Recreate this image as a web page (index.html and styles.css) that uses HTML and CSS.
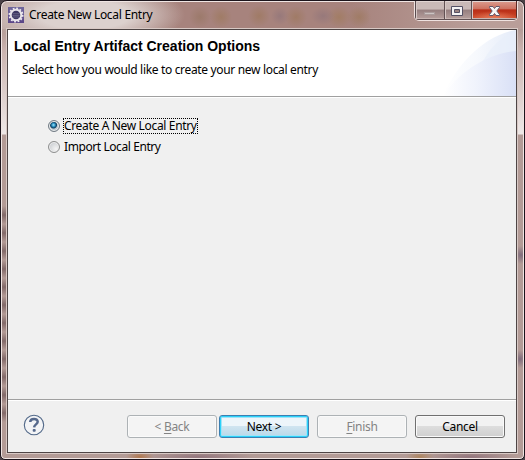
FILE: index.html
```html
<!DOCTYPE html>
<html lang="en">
<head>
<meta charset="utf-8">
<title>Create New Local Entry</title>
<link rel="stylesheet" href="styles.css">
</head>
<body>
<div class="window">
  <header class="titlebar">
    <svg class="app-icon" width="16" height="16" viewBox="0 0 16 16">
      <defs><linearGradient id="app" x2="0" y2="1"><stop stop-color="#6f679c"/><stop offset="1" stop-color="#5b4687"/></linearGradient></defs>
      <rect width="16" height="16" fill="url(#app)"/>
      <circle cx="8" cy="8" r="6.6" fill="none" stroke="#eeeaf0" stroke-width="1.8" stroke-dasharray="1.8 1.656"/>
      <circle cx="8" cy="8" r="5.3" fill="#3d3862" stroke="#e8e5ea" stroke-width="2"/>
      <path d="M4.5 6.7h7M4.300 8.4h7.4M4.800 10h6.400" stroke="#7d7898" stroke-width=".6"/>
    </svg>
    <span class="caption">Create New Local Entry</span>
    <div class="controls">
      <span class="control min"><svg width="28" height="19"><rect x="8.500" y="11.500" width="10" height="2" fill="#cdc4c3" stroke="#a99b9b"/></svg></span>
      <span class="control max"><svg width="26" height="19"><path fill-rule="evenodd" d="M6.500 5.500h11v9h-11zM9.500 8.500v3h5v-3z" fill="#f4f2f3" stroke="#545064"/></svg></span>
      <span class="control close"><svg width="45" height="19"><path d="M17.500 5.500h3.500l1.500 2 1.500-2h3.500v1L24.800 10l2.700 3.500v1h-3.500l-1.500-2-1.500 2h-3.500v-1l2.700-3.500-2.700-3.500z" fill="#f7f5f5" stroke="#62566a"/></svg></span>
    </div>
  </header>
  <main class="dialog">
    <section class="banner">
      <div class="banner-text">
        <h1>Local Entry Artifact Creation Options</h1>
        <p>Select how you would like to create your new local entry</p>
      </div>
      <svg class="swoosh" width="75" height="66" viewBox="0 0 75 66">
        <defs>
          <linearGradient id="outer"><stop stop-color="#fff"/><stop offset=".45" stop-color="#f7f9fd"/><stop offset="1" stop-color="#e5ecf9"/></linearGradient>
          <linearGradient id="inner"><stop stop-color="#fff"/><stop offset=".45" stop-color="#f0f3fc"/><stop offset="1" stop-color="#d9e0f6"/></linearGradient>
        </defs>
        <path d="M2 66C14 37 42 5 75 0v66z" fill="url(#outer)"/>
        <path d="M36 43C46 21 58 7 75 1v30z" fill="#e7eefa" opacity=".6"/>
        <path d="M2 66C16 45 42 24 75 21v45z" fill="url(#inner)"/>
      </svg>
    </section>
    <section class="options">
      <div class="option"><span class="radio checked"></span><span class="label first focused">Create A New Local Entry</span></div>
      <div class="option"><span class="radio"></span><span class="label second">Import Local Entry</span></div>
    </section>
    <footer class="actions">
      <svg class="help" width="22" height="22" viewBox="0 0 22 22">
        <circle cx="11" cy="11" r="9.700" fill="#f3f4f6" stroke="#516888" stroke-width="1.100"/>
        <path d="M7.200 8C7.400 4.100 14.700 3.900 14.700 7.800C14.700 10.400 11.200 10.400 11.100 13.400" fill="none" stroke="#56698c" stroke-width="2.500"/>
        <rect x="9.700" y="15" width="3" height="2.700" rx="1" fill="#56698c"/>
      </svg>
      <button class="btn back" disabled><span>&lt; <u>B</u>ack</span></button>
      <button class="btn next"><span>Next &gt;</span></button>
      <button class="btn finish" disabled><span><u>F</u>inish</span></button>
      <button class="btn cancel"><span>Cancel</span></button>
    </footer>
  </main>
</div>
</body>
</html>
```
FILE: styles.css
```css
* { box-sizing: border-box; }
body {
  margin: 0;
  background: #4a4146;
  font: 12px/16px "Noto Sans", "Open Sans", sans-serif;
  color: #000;
}
.window {
  width: 525px;
  height: 460px;
  border: 1px solid #1b141b;
  border-radius: 7px 7px 5px 5px;
  padding: 0 5px 5px;
  box-shadow: inset 0 0 0 1px #f0e5e3;
  background:
    radial-gradient(ellipse 14px 7px at 139px 456px, #b07850, transparent),
    radial-gradient(ellipse 55px 7px at 198px 456px, #93767d, transparent),
    radial-gradient(ellipse 14px 7px at 419px 456px, #ad8560, transparent),
    radial-gradient(ellipse 45px 7px at 470px 456px, #93767d, transparent),
    radial-gradient(ellipse 9px 9px at 520px 254px, #806c7c, transparent),
    radial-gradient(ellipse 8px 9px at 519px 358px, #806c7c, transparent),
    repeating-linear-gradient(transparent 0, rgba(90,65,68,.55) 9px, transparent 18px) 0 205px / 7px 216px no-repeat,
    linear-gradient(transparent 28px, #cbb4b0 50px, #eee8e7 133px, transparent 134px),
    radial-gradient(ellipse 100px 32px at 84px 14px, #dcd1ce 45%, transparent),
    radial-gradient(ellipse 11px 11px at 199px 16px, #9c7a6b, transparent),
    radial-gradient(ellipse 11px 11px at 220px 16px, #a07c66, transparent),
    radial-gradient(ellipse 11px 11px at 258px 15px, #a07b66, transparent),
    radial-gradient(ellipse 9px 9px at 279px 15px, #97797b, transparent),
    radial-gradient(ellipse 11px 11px at 295px 16px, #a07b66, transparent),
    radial-gradient(ellipse 12px 9px at 322px 15px, #97797b, transparent),
    radial-gradient(ellipse 12px 11px at 338px 16px, #a27d65, transparent),
    radial-gradient(ellipse 12px 11px at 358px 16px, #a07c66, transparent),
    linear-gradient(90deg, #bda7a3, #a7837d 180px 350px, #b99e99 480px) 0 0 / 100% 28px no-repeat,
    #b39b96;
}
.titlebar { height: 27px; display: flex; align-items: flex-start; padding: 0 1px 0 2px; }
.app-icon { margin-top: 6px; }
.caption { margin: 6px 0 0 5px; letter-spacing: -.3px; white-space: nowrap; }
.controls {
  display: flex;
  width: 104px;
  height: 20px;
  margin: 0 0 0 auto;
  border: 1px solid #efe2e0;
  border-top: 0;
  border-radius: 0 0 5px 5px;
  overflow: hidden;
}
.control {
  height: 19px;
  border: 1px solid #625153;
  border-width: 0 0 1px 1px;
  box-shadow: inset 1px 0 #d7c8c6, inset 0 1px #e1d5d3, inset 0 -1px #c8b5b2;
  background: linear-gradient(#c9b9b7 45%, #967f7f 50%, #b69f9d);
}
.control svg { display: block; }
.min { width: 29px; border-left-color: #594b4e; }
.max { width: 27px; }
.close {
  width: 46px;
  border-right: 1px solid #5b2925;
  background: radial-gradient(ellipse 25px 8px at 50% 100%, #e88061, transparent), linear-gradient(#db9d90, #cd7160 44%, #b92e18 49%, #cf4b2a);
}
.dialog {
  width: 512px;
  height: 426px;
  border: 1px solid #d8c9c5;
  box-shadow: inset 0 0 0 1px #4e4545;
  padding: 1px;
  display: flex;
  flex-direction: column;
  background: #f0f0f0;
  background-clip: padding-box;
}
.banner {
  height: 67px;
  flex: none;
  border-bottom: 1px solid #a0a0a0;
  background: #fff;
  display: flex;
  justify-content: space-between;
}
.banner-text { padding: 8px 0 0 6px; white-space: nowrap; }
h1 { margin: 0; font: bold 14px/16px "Liberation Sans", Arial, sans-serif; letter-spacing: 0; }
p { margin: 8px 0 0 8px; letter-spacing: -.33px; }
.swoosh { flex: none; }
.options { border-top: 1px solid #fff; flex: 1; padding: 19px 0 0 40px; }
.option { display: flex; align-items: center; height: 17px; margin-bottom: 4px; }
.radio {
  width: 12px;
  height: 12px;
  border: 1px solid #8e8f8f;
  border-radius: 50%;
  background: radial-gradient(circle at 70% 70%, #f5f5f5, #bfc3c8);
  box-shadow: inset 0 0 0 1px #eee;
}
.radio.checked {
  border-color: #717b84;
  background: radial-gradient(circle at 45% 40%, #a8e5fa 0, #349dcc 1.500px, #0b3e62 3px, #bfc8cf 4px);
}
.label { margin-left: 3px; padding: 0 0 0 1px; height: 16px; line-height: 16px; white-space: nowrap; }
.first { letter-spacing: -.34px; }
.second { letter-spacing: -.42px; }
.focused { width: 135px; outline: 1px dotted #000; outline-offset: -1px; }
.actions {
  height: 53px;
  border-top: 1px solid #a0a0a0;
  box-shadow: inset 0 1px #fff;
  display: flex;
  align-items: flex-start;
  padding: 15px 11px 0 15px;
}
.help { margin: -1px auto 0 0; }
.btn {
  width: 90px;
  height: 23px;
  border: 1px solid #707070;
  border-radius: 3px;
  padding: 0;
  font: inherit;
  letter-spacing: -.3px;
  color: #000;
  background: linear-gradient(#f2f2f2 48%, #ddd 50%, #cfcfcf);
  box-shadow: inset 0 0 0 1px #fafafa;
}
.btn:disabled { color: #838383; border-color: #adb2b5; background: #f4f4f4; }
.btn u { text-underline-offset: 2px; }
.next {
  margin: 0 8px 0 2px;
  border-color: #3c7fb1;
  background: linear-gradient(#edf5fa 48%, #cfe4f0 50%, #b8d8e9);
  box-shadow: inset 0 0 0 1px #2bd2fa, inset 0 0 0 2px #a2e3f7;
}
.cancel { margin-left: 8px; }
```
